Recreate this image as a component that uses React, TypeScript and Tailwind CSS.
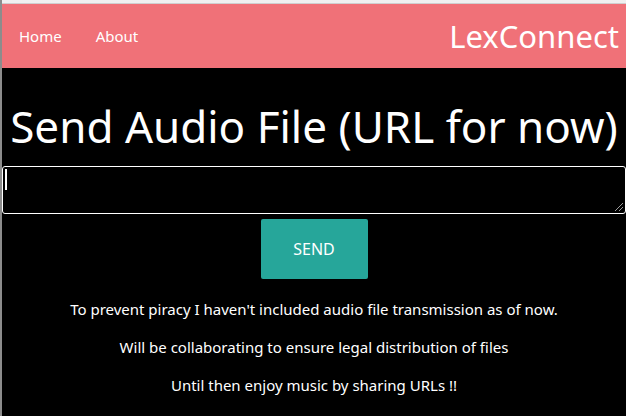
import { useState } from 'react'

const font = { fontFamily: '"Noto Sans", "Open Sans", sans-serif' }

export default function App() {
  const [url, setUrl] = useState('')

  const notes = [
    "To prevent piracy I haven't included audio file transmission as of now.",
    'Will be collaborating to ensure legal distribution of files',
    'Until then enjoy music by sharing URLs !!',
  ]

  return (
    <div className="min-h-screen bg-black border-l-2 border-[#8c8c8c] text-white" style={font}>
      <div className="h-[4px] bg-[#f0f0f0] border-b border-[#cfcfcf]" />
      <nav className="h-16 bg-[#f07178] flex items-center justify-between">
        <ul className="flex items-center">
          <li><a className="px-[17px] text-[15px]">Home</a></li>
          <li><a className="px-[17px] text-[15px]">About</a></li>
        </ul>
        <a className="pr-[7px] text-[31px] leading-none">LexConnect</a>
      </nav>

      <main className="flex flex-col items-center">
        <h1 className="mt-[28px] text-[44px] leading-[60px] text-center">Send Audio File (URL for now)</h1>
        <div className="relative mt-[10px] w-full">
          <textarea
            value={url}
            onChange={(e) => setUrl(e.target.value)}
            className="block w-full h-[48px] bg-black border border-white rounded-[3px] px-1 text-white caret-white outline-none resize-none"
          />
          {url === '' && <span className="absolute left-[3px] top-[3px] w-[2px] h-[21px] bg-white pointer-events-none" />}
          <svg className="absolute right-[2px] bottom-[2px] pointer-events-none" width="10" height="10" viewBox="0 0 10 10">
            <path d="M1 9L9 1M5 9L9 5" stroke="#9a9a9a" strokeWidth="1" />
          </svg>
        </div>
        <button className="mt-[5px] w-[107px] h-[60px] bg-[#26a69a] rounded-[2px] text-[16px] text-white">
          SEND
        </button>
        <div className="mt-[19px] flex flex-col items-center gap-[15px] text-[15px]">
          {notes.map((n, i) => (
            <p key={i} className="leading-[23px]">{n}</p>
          ))}
        </div>
      </main>
    </div>
  )
}
